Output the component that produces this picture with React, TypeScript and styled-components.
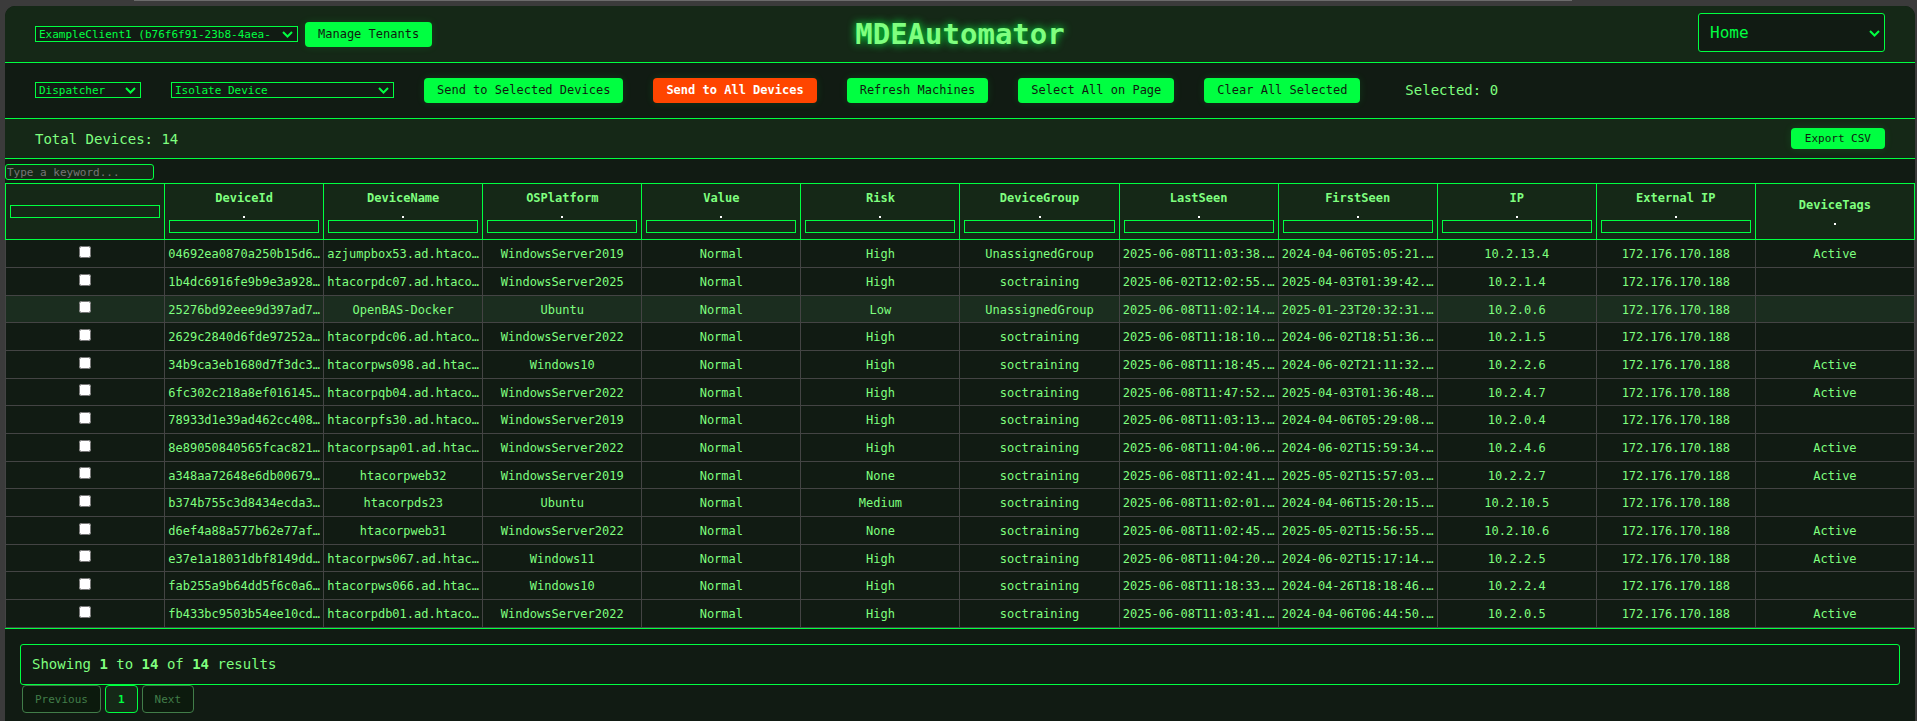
import React, { useState } from "react";
import styled, { createGlobalStyle, css } from "styled-components";

const green = "#00ff41";
const softGreen = "#7fff7f";
const panelDark = "#111b13";
const panelLight = "#152817";
const mono = `Consolas, "DejaVu Sans Mono", monospace`;

const GlobalStyle = createGlobalStyle`
  *, *::before, *::after { box-sizing: border-box; }
  body {
    margin: 0;
    background: #3b3b3b;
    color: ${softGreen};
    font-family: ${mono};
    font-size: 14px;
  }
  button, input, select { font-family: inherit; }
`;

const Page = styled.div`
  display: flex;
  flex-direction: column;
  min-height: 100vh;
`;

const TopStrip = styled.div`
  height: 1px;
  margin: 0 18% 5px 7%;
  background: #6b6b6b;
`;

const Panel = styled.main`
  flex: 1;
  margin: 0 2px 0 5px;
  background: ${panelDark};
  border-radius: 10px 10px 0 0;
  overflow: hidden;
`;

const Header = styled.header`
  display: grid;
  grid-template-columns: 1fr auto 1fr;
  align-items: center;
  min-height: 57px;
  padding: 0 30px;
  background: ${panelLight};
  border-bottom: 1px solid ${green};
`;

const HeaderGroup = styled.div<{ $end?: boolean }>`
  display: flex;
  align-items: center;
  justify-content: ${(p) => (p.$end ? "flex-end" : "flex-start")};
  gap: 7px;
  padding-bottom: ${(p) => (p.$end ? 3 : 0)}px;
`;

const Title = styled.h1`
  margin: 0;
  font-size: 29px;
  line-height: 32px;
  font-weight: 700;
  text-shadow: 0 0 8px ${green};
`;

const Toolbar = styled.section`
  display: flex;
  flex-wrap: wrap;
  align-items: center;
  gap: 0 30px;
  min-height: 56px;
  padding: 0 30px 1px;
  border-bottom: 1px solid ${green};
`;

const SummaryBar = styled.section`
  display: flex;
  align-items: center;
  justify-content: space-between;
  min-height: 40px;
  padding: 0 30px;
  background: ${panelLight};
  border-bottom: 1px solid ${green};
`;

const SelectedCount = styled.span`
  margin-left: 15px;
`;

const SelectWrap = styled.div<{ $width: number }>`
  position: relative;
  display: flex;
  width: ${(p) => p.$width}px;
`;

const SelectBox = styled.select<{ $large?: boolean }>`
  appearance: none;
  width: 100%;
  height: 16px;
  margin: 0;
  padding: 0 16px 0 3px;
  border: 1px solid ${green};
  border-radius: 0;
  background: ${panelDark};
  color: ${green};
  font-size: 11px;
  ${(p) =>
    p.$large &&
    css`
      height: 39px;
      padding: 0 16px 0 11px;
      border-radius: 3px;
      font-size: 16px;
    `}
`;

const Chevron = styled.svg`
  position: absolute;
  top: calc(50% - 3px);
  right: 5px;
  width: 11px;
  height: 7px;
  pointer-events: none;
`;

const Button = styled.button<{ $danger?: boolean; $small?: boolean }>`
  height: ${(p) => (p.$small ? 21 : 25)}px;
  padding: ${(p) => (p.$small ? "0 14px" : "0 13px")};
  border: 0;
  border-radius: 4px;
  background: ${(p) => (p.$danger ? "#ff4500" : green)};
  color: ${(p) => (p.$danger ? "#ffffff" : "#101a10")};
  font-size: ${(p) => (p.$small ? 11 : 12)}px;
  font-weight: ${(p) => (p.$danger ? 700 : 400)};
  white-space: nowrap;
  box-shadow: 0 0 8px rgba(0, 255, 65, 0.12);
  cursor: pointer;
`;

const SearchRow = styled.div`
  display: flex;
  padding: 5px 0 3px;
`;

const SearchInput = styled.input`
  width: 149px;
  height: 16px;
  padding: 0 1px;
  border: 1px solid ${green};
  border-radius: 3px;
  background: ${panelLight};
  color: ${green};
  font-size: 11px;
  &::placeholder { color: #757575; }
`;

const Table = styled.table`
  width: 100%;
  table-layout: fixed;
  border-collapse: collapse;
  font-size: 12px;
  text-align: center;
`;

const HeadCell = styled.th`
  height: 56px;
  padding: 0 4px 1px;
  border: 1px solid ${green};
  background: ${panelLight};
  vertical-align: middle;
`;

const HeadLabel = styled.div`
  line-height: 18px;
`;

const SortButton = styled.button`
  display: flex;
  align-items: flex-end;
  justify-content: center;
  width: 100%;
  height: 13px;
  padding: 0 0 2px;
  border: 0;
  background: none;
  cursor: pointer;
  &::after {
    content: "";
    width: 2px;
    height: 2px;
    background: #ffffff;
  }
`;

const FilterInput = styled.input`
  display: block;
  width: 100%;
  height: 13px;
  padding: 0 2px;
  border: 1px solid ${green};
  background: ${panelLight};
  color: ${green};
  font-size: 11px;
`;

const Row = styled.tr<{ $hovered?: boolean }>`
  height: 28px;
  background: ${(p) => (p.$hovered ? "#1b2d1f" : "transparent")};
  &:nth-child(3n) { height: 27px; }
`;

const Cell = styled.td`
  padding: 1px 3px 0;
  border: 1px solid #444444;
  line-height: 16px;
  white-space: nowrap;
  overflow: hidden;
`;

const CheckCell = styled(Cell)`
  padding: 0 3px 4px;
`;

const Check = styled.input`
  display: block;
  width: 12px;
  height: 12px;
  margin: 0 auto;
`;

const Footer = styled.footer`
  padding: 15px 15px 7px;
  border-top: 1px solid ${green};
`;

const Results = styled.div`
  padding: 11px;
  border: 1px solid ${green};
  border-radius: 3px;
  line-height: 17px;
`;

const Pages = styled.nav`
  display: flex;
  gap: 4px;
  padding-left: 2px;
`;

const PageButton = styled.button<{ $current?: boolean }>`
  height: 28px;
  padding: 0 12px;
  border: 1px solid ${green};
  border-radius: 4px;
  background: ${panelLight};
  color: ${green};
  font-size: 11px;
  font-weight: ${(p) => (p.$current ? 700 : 400)};
  &:disabled {
    border-color: #417d49;
    background: #0c1a0d;
    color: #417d49;
  }
`;

const columns = [
  "DeviceId", "DeviceName", "OSPlatform", "Value", "Risk", "DeviceGroup",
  "LastSeen", "FirstSeen", "IP", "External IP", "DeviceTags",
];

const EXTERNAL_IP = "172.176.170.188";

// id, name, platform, risk, group, last seen, first seen, ip, tag
const devices: string[][] = [
  ["04692ea0870a250b15d6…", "azjumpbox53.ad.htaco…", "WindowsServer2019", "High", "UnassignedGroup", "2025-06-08T11:03:38.…", "2024-04-06T05:05:21.…", "10.2.13.4", "Active"],
  ["1b4dc6916fe9b9e3a928…", "htacorpdc07.ad.htaco…", "WindowsServer2025", "High", "soctraining", "2025-06-02T12:02:55.…", "2025-04-03T01:39:42.…", "10.2.1.4", ""],
  ["25276bd92eee9d397ad7…", "OpenBAS-Docker", "Ubuntu", "Low", "UnassignedGroup", "2025-06-08T11:02:14.…", "2025-01-23T20:32:31.…", "10.2.0.6", ""],
  ["2629c2840d6fde97252a…", "htacorpdc06.ad.htaco…", "WindowsServer2022", "High", "soctraining", "2025-06-08T11:18:10.…", "2024-06-02T18:51:36.…", "10.2.1.5", ""],
  ["34b9ca3eb1680d7f3dc3…", "htacorpws098.ad.htac…", "Windows10", "High", "soctraining", "2025-06-08T11:18:45.…", "2024-06-02T21:11:32.…", "10.2.2.6", "Active"],
  ["6fc302c218a8ef016145…", "htacorpqb04.ad.htaco…", "WindowsServer2022", "High", "soctraining", "2025-06-08T11:47:52.…", "2025-04-03T01:36:48.…", "10.2.4.7", "Active"],
  ["78933d1e39ad462cc408…", "htacorpfs30.ad.htaco…", "WindowsServer2019", "High", "soctraining", "2025-06-08T11:03:13.…", "2024-04-06T05:29:08.…", "10.2.0.4", ""],
  ["8e89050840565fcac821…", "htacorpsap01.ad.htac…", "WindowsServer2022", "High", "soctraining", "2025-06-08T11:04:06.…", "2024-06-02T15:59:34.…", "10.2.4.6", "Active"],
  ["a348aa72648e6db00679…", "htacorpweb32", "WindowsServer2019", "None", "soctraining", "2025-06-08T11:02:41.…", "2025-05-02T15:57:03.…", "10.2.2.7", "Active"],
  ["b374b755c3d8434ecda3…", "htacorpds23", "Ubuntu", "Medium", "soctraining", "2025-06-08T11:02:01.…", "2024-04-06T15:20:15.…", "10.2.10.5", ""],
  ["d6ef4a88a577b62e77af…", "htacorpweb31", "WindowsServer2022", "None", "soctraining", "2025-06-08T11:02:45.…", "2025-05-02T15:56:55.…", "10.2.10.6", "Active"],
  ["e37e1a18031dbf8149dd…", "htacorpws067.ad.htac…", "Windows11", "High", "soctraining", "2025-06-08T11:04:20.…", "2024-06-02T15:17:14.…", "10.2.2.5", "Active"],
  ["fab255a9b64dd5f6c0a6…", "htacorpws066.ad.htac…", "Windows10", "High", "soctraining", "2025-06-08T11:18:33.…", "2024-04-26T18:18:46.…", "10.2.2.4", ""],
  ["fb433bc9503b54ee10cd…", "htacorpdb01.ad.htaco…", "WindowsServer2022", "High", "soctraining", "2025-06-08T11:03:41.…", "2024-04-06T06:44:50.…", "10.2.0.5", "Active"],
];

type DropDownProps = { label: string; option: string; width: number; large?: boolean };

function DropDown({ label, option, width, large }: DropDownProps) {
  return (
    <SelectWrap $width={width}>
      <SelectBox aria-label={label} $large={large}>
        <option>{option}</option>
      </SelectBox>
      <Chevron viewBox="0 0 11 7" fill="none" stroke={green} strokeWidth="2" aria-hidden="true">
        <path d="M1 1L5.5 5.5L10 1" />
      </Chevron>
    </SelectWrap>
  );
}

export default function App() {
  const [selected, setSelected] = useState<string[]>([]);
  const toggle = (id: string) =>
    setSelected((s) => (s.includes(id) ? s.filter((x) => x !== id) : [...s, id]));

  return (
    <Page>
      <GlobalStyle />
      <TopStrip />
      <Panel>
        <Header>
          <HeaderGroup>
            <DropDown label="Tenant" option="ExampleClient1 (b76f6f91-23b8-4aea-" width={263} />
            <Button>Manage Tenants</Button>
          </HeaderGroup>
          <Title>MDEAutomator</Title>
          <HeaderGroup $end>
            <DropDown label="Page" option="Home" width={187} large />
          </HeaderGroup>
        </Header>

        <Toolbar>
          <DropDown label="Function" option="Dispatcher" width={106} />
          <DropDown label="Action" option="Isolate Device" width={223} />
          <Button>Send to Selected Devices</Button>
          <Button $danger>Send to All Devices</Button>
          <Button>Refresh Machines</Button>
          <Button onClick={() => setSelected(devices.map((d) => d[0]))}>Select All on Page</Button>
          <Button onClick={() => setSelected([])}>Clear All Selected</Button>
          <SelectedCount>Selected: {selected.length}</SelectedCount>
        </Toolbar>

        <SummaryBar>
          <span>Total Devices: 14</span>
          <Button $small>Export CSV</Button>
        </SummaryBar>

        <SearchRow>
          <SearchInput type="search" aria-label="Search devices" placeholder="Type a keyword..." />
        </SearchRow>

        <Table>
          <thead>
            <tr>
              <HeadCell scope="col">
                <FilterInput aria-label="Filter selection" />
              </HeadCell>
              {columns.map((name) => (
                <HeadCell key={name} scope="col">
                  <HeadLabel>{name}</HeadLabel>
                  <SortButton aria-label={`Sort by ${name}`} />
                  {name !== "DeviceTags" && <FilterInput aria-label={`Filter ${name}`} />}
                </HeadCell>
              ))}
            </tr>
          </thead>
          <tbody>
            {devices.map(([id, name, platform, risk, group, last, first, ip, tag], i) => (
              <Row key={id} $hovered={i === 2}>
                <CheckCell>
                  <Check
                    type="checkbox"
                    aria-label={`Select ${name}`}
                    checked={selected.includes(id)}
                    onChange={() => toggle(id)}
                  />
                </CheckCell>
                {[id, name, platform, "Normal", risk, group, last, first, ip, EXTERNAL_IP, tag].map(
                  (value, c) => (
                    <Cell key={c}>{value}</Cell>
                  )
                )}
              </Row>
            ))}
          </tbody>
        </Table>

        <Footer>
          <Results>
            Showing <b>1</b> to <b>14</b> of <b>14</b> results
          </Results>
          <Pages aria-label="Pagination">
            <PageButton disabled>Previous</PageButton>
            <PageButton $current>1</PageButton>
            <PageButton disabled>Next</PageButton>
          </Pages>
        </Footer>
      </Panel>
    </Page>
  );
}
